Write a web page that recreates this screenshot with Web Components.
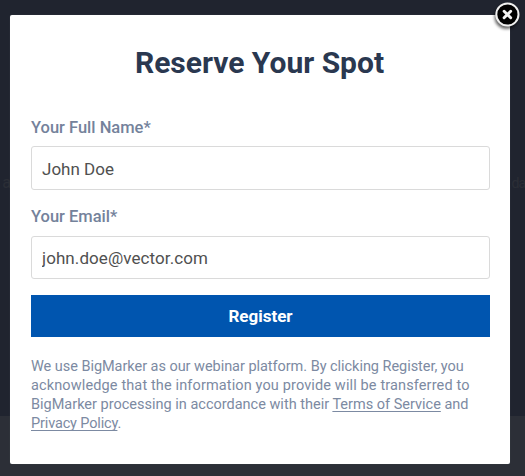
<!DOCTYPE html>
<html lang="en">
<head>
<meta charset="utf-8">
<title>Reserve Your Spot</title>
<style>
    html, body {
        margin: 0;
        height: 100%;
        overflow: hidden;
        font-family: Roboto, "Liberation Sans", sans-serif;
    }
</style>
</head>
<body>
<modal-backdrop>
    <reserve-dialog heading="Reserve Your Spot">
        <close-button slot="close"></close-button>
        <form-field label="Your Full Name*" value="John Doe" style="--field-height: 44px; --field-gap: 17px"></form-field>
        <form-field label="Your Email*" value="john.doe@vector.com" style="--label-gap: 9px; --field-spacing: 0.08px; --field-inset: 0"></form-field>
        <submit-button>Register</submit-button>
        <legal-notice></legal-notice>
    </reserve-dialog>
</modal-backdrop>

<script>
class ModalBackdrop extends HTMLElement {
    constructor() {
        super()
        this.attachShadow({ mode: 'open' })
        this.shadowRoot.innerHTML = `
            <style>
                :host {
                    display: block;
                    box-sizing: border-box;
                    position: relative;
                    height: 476px;
                    padding: 15px 15px 12px 10px;
                    background: linear-gradient(#20242f 0, #20242f 416px, #2c2f37 416px);
                }
                /* dimmed page text showing past the dialog edges */
                .page-text {
                    position: absolute;
                    top: 172px;
                    font-size: 16px;
                    line-height: 22px;
                    white-space: nowrap;
                    color: #2b2e36;
                }
                .left { right: 514px; }
                .right {
                    right: 0;
                    font-size: 14px;
                    letter-spacing: -1px;
                }
            </style>
            <span class="page-text left">o a</span>
            <span class="page-text right">da</span>
            <slot></slot>
        `
    }
}

class ReserveDialog extends HTMLElement {
    constructor() {
        super()
        this.attachShadow({ mode: 'open' })
        this.shadowRoot.innerHTML = `
            <style>
                :host {
                    display: flex;
                    flex-direction: column;
                    box-sizing: border-box;
                    position: relative;
                    height: 449px;
                    padding: 30px 20px 0 21px;
                    background: #fff;
                    border-radius: 2px;
                    box-shadow: 0 0 1px 0 rgba(110, 115, 125, .6);
                }
                h1 {
                    margin: 0 2px 37px 0;
                    font-size: 30px;
                    line-height: 36px;
                    font-weight: 700;
                    text-align: center;
                    color: #2a3850;
                }
            </style>
            <h1></h1>
            <slot></slot>
            <slot name="close"></slot>
        `
    }

    connectedCallback() {
        this.shadowRoot.querySelector('h1').textContent = this.getAttribute('heading')
    }
}

class CloseButton extends HTMLElement {
    constructor() {
        super()
        this.attachShadow({ mode: 'open' })
        this.shadowRoot.innerHTML = `
            <style>
                :host {
                    display: block;
                    position: absolute;
                    top: -15px;
                    right: -15px;
                    width: 34px;
                    height: 34px;
                }
                svg { display: block; }
            </style>
            <svg width="34" height="34" viewBox="0 0 34 34">
                <defs>
                    <filter id="soft" x="-30%" y="-30%" width="160%" height="160%">
                        <feGaussianBlur stdDeviation="1.4" />
                    </filter>
                </defs>
                <circle cx="15.5" cy="17" r="12" fill="#000" opacity=".6" filter="url(#soft)" />
                <circle cx="16.4" cy="14.5" r="11.1" fill="#000" stroke="#efefef" stroke-width="2" />
                <path d="M13.1 11.2l6.6 6.6M19.7 11.2l-6.6 6.6" stroke="#f4f4f4" stroke-width="2.9" stroke-linecap="round" />
            </svg>
        `
    }
}

class FormField extends HTMLElement {
    constructor() {
        super()
        this.attachShadow({ mode: 'open' })
        this.shadowRoot.innerHTML = `
            <style>
                :host {
                    display: flex;
                    flex-direction: column;
                    margin-bottom: var(--field-gap, 16px);
                }
                label {
                    margin-bottom: var(--label-gap, 8px);
                    font-size: 16.5px;
                    line-height: 20px;
                    font-weight: 500;
                    color: #74829b;
                }
                input {
                    box-sizing: border-box;
                    width: 100%;
                    height: var(--field-height, 43px);
                    padding: var(--field-inset, 1px) 10px 0;
                    border: 1px solid #dadada;
                    border-radius: 3px;
                    outline: none;
                    background: #fff;
                    font: 400 17px Roboto, "Liberation Sans", sans-serif;
                    letter-spacing: var(--field-spacing, 0);
                    color: #505050;
                }
            </style>
            <label for="field"></label>
            <input id="field" type="text">
        `
    }

    connectedCallback() {
        this.shadowRoot.querySelector('label').textContent = this.getAttribute('label')
        this.shadowRoot.querySelector('input').value = this.getAttribute('value')
    }
}

class SubmitButton extends HTMLElement {
    constructor() {
        super()
        this.attachShadow({ mode: 'open' })
        this.shadowRoot.innerHTML = `
            <style>
                :host { display: block; }
                button {
                    display: block;
                    width: 100%;
                    height: 42px;
                    padding: 0;
                    border: 0;
                    background: #0055af;
                    color: #fff;
                    font: 700 17px/42px Roboto, "Liberation Sans", sans-serif;
                }
            </style>
            <button type="submit"><slot></slot></button>
        `
    }
}

class LegalNotice extends HTMLElement {
    constructor() {
        super()
        this.attachShadow({ mode: 'open' })
        this.shadowRoot.innerHTML = `
            <style>
                :host {
                    display: block;
                    margin-top: 20px;
                    font-size: 14.5px;
                    line-height: 19px;
                    white-space: nowrap;
                    color: #7c8aa2;
                }
                span { display: block; }
                .first { letter-spacing: -0.04px; }
                .loose { letter-spacing: 0.13px; }
                .tight { letter-spacing: -0.15px; }
                a {
                    color: inherit;
                    text-decoration: underline;
                    text-underline-offset: 2px;
                    text-decoration-skip-ink: none;
                }
            </style>
            <span class="first">We use BigMarker as our webinar platform. By clicking Register, you</span>
            <span class="loose">acknowledge that the information you provide will be transferred to</span>
            <span>BigMarker processing in accordance with their <a href="#">Terms of Service</a> and</span>
            <span class="tight"><a href="#">Privacy Policy</a>.</span>
        `
    }
}

customElements.define('modal-backdrop', ModalBackdrop)
customElements.define('reserve-dialog', ReserveDialog)
customElements.define('close-button', CloseButton)
customElements.define('form-field', FormField)
customElements.define('submit-button', SubmitButton)
customElements.define('legal-notice', LegalNotice)
</script>
</body>
</html>
